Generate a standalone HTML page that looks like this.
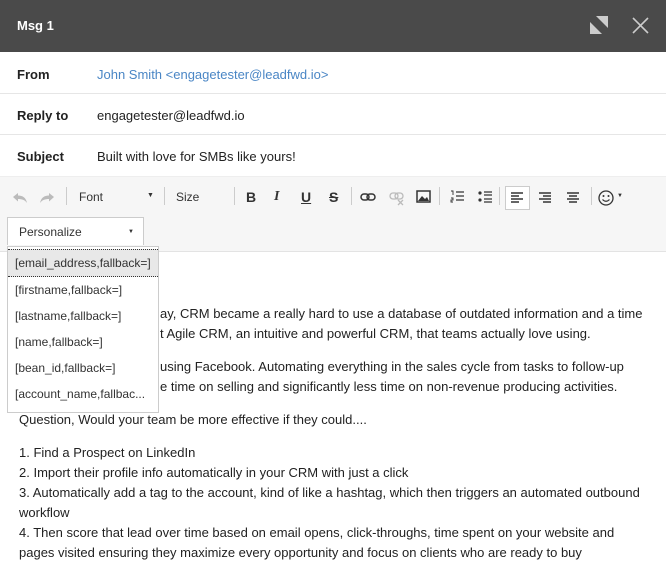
<!DOCTYPE html>
<html><head><style>
*{margin:0;padding:0;box-sizing:border-box}
body{width:666px;height:581px;overflow:hidden;font-family:"Liberation Sans",Arial,sans-serif;font-size:13px;color:#222;background:#fff;position:relative}
.hd{position:absolute;left:0;top:0;width:666px;height:52px;background:#4a4a4a;color:#fff;font-weight:bold;font-size:13px}
.row{position:absolute;left:0;width:666px;height:41px;border-bottom:1px solid #e6e6e6}
.row b{position:absolute;left:17px;top:14px;font-size:13px}
.row span{position:absolute;left:97px;top:14px}
.tb{position:absolute;left:0;top:176px;width:666px;height:76px;background:#f6f6f6;border-bottom:1px solid #e3e3e3;border-top:1px solid #eee}
.ab{position:absolute;font-size:12px;color:#333}
.ic{position:absolute;top:13px}
.sep{position:absolute;top:10px;width:1px;height:18px;background:#ccc}
.dd{position:absolute;left:7px;top:246px;width:152px;height:167px;background:#fff;border:1px solid #ccc;font-size:12px;color:#333}
.dd div{height:26px;line-height:26px;padding-left:7px}
p{position:absolute;left:19px;line-height:20px;font-size:13px;color:#222}
</style></head><body>
<div class="hd"><span style="position:absolute;left:17px;top:18px">Msg 1</span>
<svg style="position:absolute;left:590px;top:16px" width="18" height="18"><polygon points="6,0 18,0 18,12" fill="#ccc"/><polygon points="0,6 0,18 12,18" fill="#ccc"/></svg>
<svg style="position:absolute;left:632px;top:17px" width="17" height="17"><path d="M1 1L16 16M16 1L1 16" stroke="#ccc" stroke-width="1.6"/></svg></div>
<div class="row" style="top:53px"><b>From</b><span style="color:#4a86c5">John Smith &lt;engagetester@leadfwd.io&gt;</span></div>
<div class="row" style="top:94px"><b>Reply to</b><span>engagetester@leadfwd.io</span></div>
<div class="row" style="top:135px;border:none"><b>Subject</b><span>Built with love for SMBs like yours!</span></div>
<div class="tb">
<svg class="ic" style="left:12px;top:15px" width="16" height="12"><path d="M1 5L6 1V3.5C11 3.5 14 6 15 11C13 8 10 7 6 7V9.5Z" fill="#bbb"/></svg>
<svg class="ic" style="left:39px;top:15px" width="16" height="12"><path d="M15 5L10 1V3.5C5 3.5 2 6 1 11C3 8 6 7 10 7V9.5Z" fill="#bbb"/></svg>
<div class="sep" style="left:66px"></div>
<span class="ab" style="left:79px;top:13px">Font</span><span class="ab" style="left:147px;top:15px;font-size:7px">▼</span>
<div class="sep" style="left:164px"></div>
<span class="ab" style="left:176px;top:13px">Size</span>
<div class="sep" style="left:234px"></div>
<span class="ab" style="left:246px;top:12px;font-weight:bold;font-size:14px">B</span>
<span class="ab" style="left:274px;top:12px;font-style:italic;font-size:14px;font-weight:bold;font-family:'Liberation Serif'">I</span>
<span class="ab" style="left:301px;top:12px;text-decoration:underline;font-size:14px;font-weight:bold">U</span>
<span class="ab" style="left:329px;top:12px;text-decoration:line-through;font-size:14px;font-weight:bold">S</span>
<div class="sep" style="left:351px"></div>
<svg class="ic" style="left:360px;top:15px" width="16" height="10"><rect x="1" y="2" width="8" height="6" rx="3" fill="none" stroke="#333" stroke-width="1.5"/><rect x="7" y="2" width="8" height="6" rx="3" fill="none" stroke="#333" stroke-width="1.5"/></svg>
<svg class="ic" style="left:389px;top:15px" width="16" height="14"><rect x="1" y="1" width="8" height="6" rx="3" fill="none" stroke="#bbb" stroke-width="1.3"/><rect x="6" y="1" width="8" height="6" rx="3" fill="none" stroke="#bbb" stroke-width="1.3"/><path d="M9 8L14 13M14 8L9 13" stroke="#bbb" stroke-width="1.3"/></svg>
<svg class="ic" style="left:416px;top:13px" width="15" height="13"><rect x="1" y="1" width="13" height="11" fill="none" stroke="#333" stroke-width="1.5"/><path d="M2 11L6 6L9 9L11 7L13 11Z" fill="#333"/></svg>
<div class="sep" style="left:439px"></div>
<svg class="ic" style="left:450px" width="14" height="14"><path d="M6 2H14M6 6H14M6 10H14" stroke="#333" stroke-width="1.3"/><path d="M1 1H3V5M1 8H3V10H1V12H3" stroke="#333" stroke-width="0.9" fill="none"/></svg>
<svg class="ic" style="left:478px" width="14" height="14"><circle cx="2" cy="3" r="1.6" fill="#333"/><circle cx="2" cy="10" r="1.6" fill="#333"/><path d="M6 2H14M6 5H14M6 9H14M6 12H14" stroke="#333" stroke-width="1.3"/></svg>
<div class="sep" style="left:499px"></div>
<div style="position:absolute;left:505px;top:9px;width:25px;height:24px;border:1px solid #ccc;background:#fff"></div>
<svg class="ic" style="left:511px;top:15px" width="13" height="12"><path d="M0 1H12M0 4H8M0 7H12M0 10H8" stroke="#333" stroke-width="1.4"/></svg>
<svg class="ic" style="left:539px;top:15px" width="13" height="12"><path d="M0 1H12M4 4H12M0 7H12M4 10H12" stroke="#333" stroke-width="1.4"/></svg>
<svg class="ic" style="left:567px;top:15px" width="13" height="12"><path d="M0 1H12M2 4H10M0 7H12M2 10H10" stroke="#333" stroke-width="1.4"/></svg>
<div class="sep" style="left:591px"></div>
<svg class="ic" style="left:598px;top:13px" width="16" height="16"><circle cx="8" cy="8" r="7" fill="none" stroke="#333" stroke-width="1.3"/><circle cx="5.5" cy="6" r="1" fill="#333"/><circle cx="10.5" cy="6" r="1" fill="#333"/><path d="M4.5 9.5Q8 13 11.5 9.5" stroke="#333" stroke-width="1.2" fill="none"/></svg>
<span class="ab" style="left:617px;top:16px;font-size:6px">▼</span>
<div style="position:absolute;left:7px;top:40px;width:137px;height:28px;background:#fff;border:1px solid #ccc;border-bottom:none;font-size:12px;color:#333;padding:7px 0 0 11px">Personalize<span style="position:absolute;left:120px;top:11px;font-size:6px">▼</span></div>
</div>
<div class="dd">
<div style="border-top:1px dotted #333;border-bottom:1px dotted #333;background:#e8e8e8;height:28px;margin-top:2px">[email_address,fallback=]</div>
<div>[firstname,fallback=]</div><div>[lastname,fallback=]</div><div>[name,fallback=]</div><div>[bean_id,fallback=]</div><div>[account_name,fallbac...</div>
</div>
<p style="top:304px;left:160px">ay, CRM became a really hard to use a database of outdated information and a time</p>
<p style="top:324px;left:160px">t Agile CRM, an intuitive and powerful CRM, that teams actually love using.</p>
<p style="top:357px;left:160px">using Facebook. Automating everything in the sales cycle from tasks to follow-up</p>
<p style="top:377px;left:160px">e time on selling and significantly less time on non-revenue producing activities.</p>
<p style="top:410px">Question, Would your team be more effective if they could....</p>
<p style="top:443px">1. Find a Prospect on LinkedIn</p>
<p style="top:463px">2. Import their profile info automatically in your CRM with just a click</p>
<p style="top:483px">3. Automatically add a tag to the account, kind of like a hashtag, which then triggers an automated outbound</p>
<p style="top:503px">workflow</p>
<p style="top:523px">4. Then score that lead over time based on email opens, click-throughs, time spent on your website and</p>
<p style="top:543px">pages visited ensuring they maximize every opportunity and focus on clients who are ready to buy</p>
</body></html>
